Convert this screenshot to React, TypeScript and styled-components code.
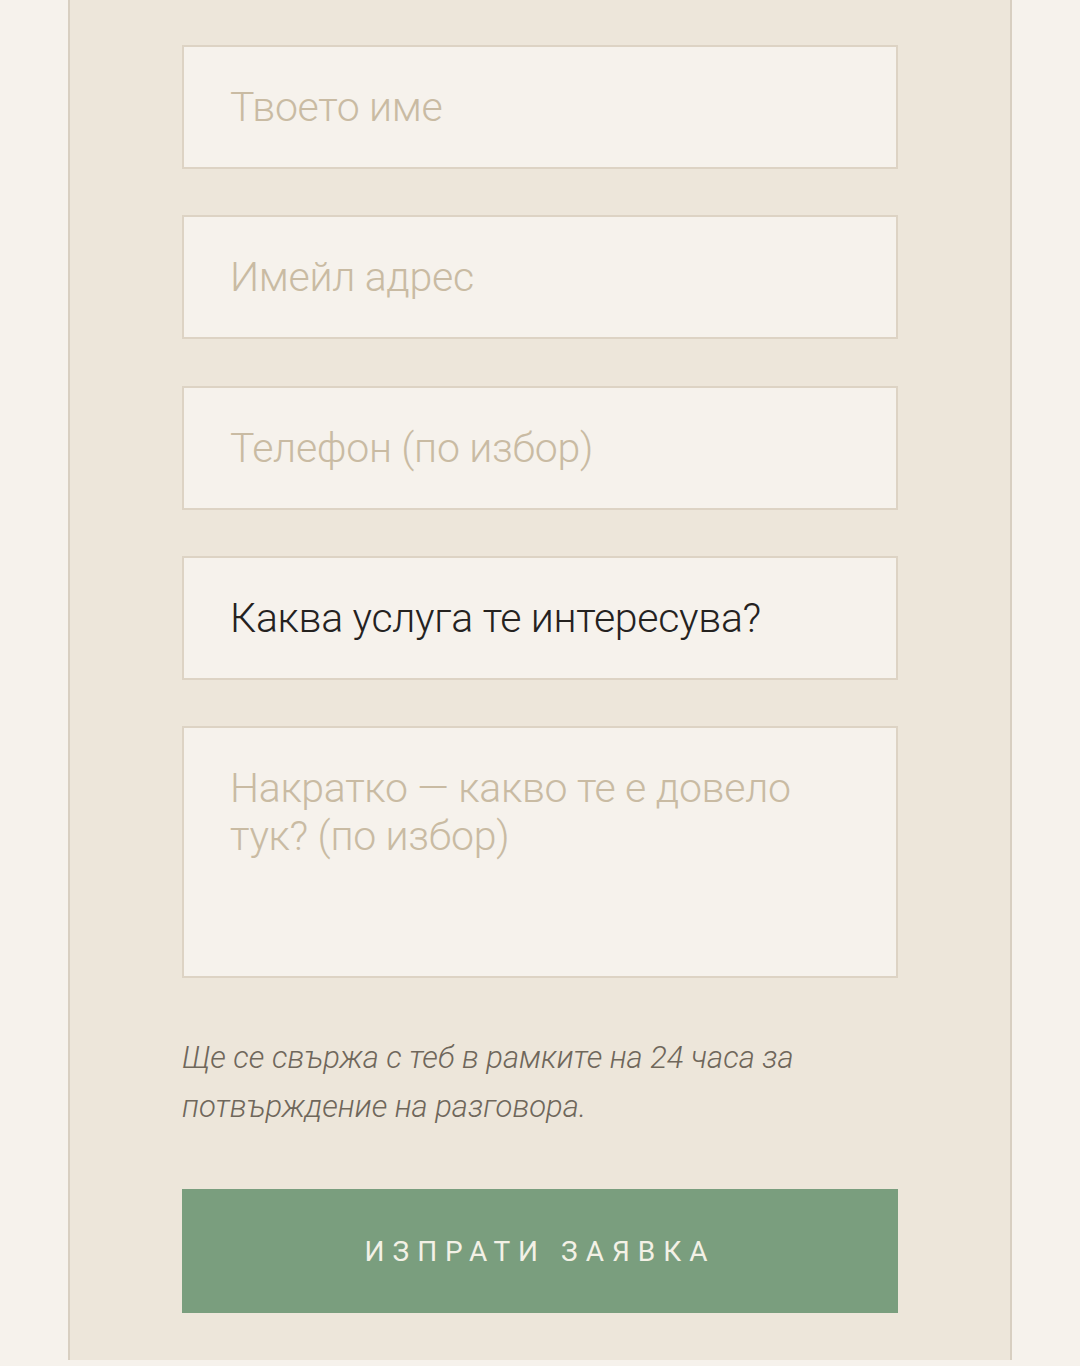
import React from "react";
import styled, { createGlobalStyle } from "styled-components";

const Global = createGlobalStyle`
  html, body { margin: 0; padding: 0; background: #f6f2ec; }
  body { font-family: Roboto, "Noto Sans", sans-serif; }
  * { box-sizing: border-box; }
`;

const Page = styled.div`
  width: 1080px;
  height: 1366px;
  background: #f6f2ec;
  display: flex;
  justify-content: center;
  align-items: flex-start;
`;

const Panel = styled.div`
  width: 944px;
  height: 1360px;
  background: #ede6da;
  border-left: 2px solid #d8cfc1;
  border-right: 2px solid #d8cfc1;
  padding: 45px 112px 0 112px;
`;

const Form = styled.form`
  display: flex;
  flex-direction: column;
  gap: 46.25px;
`;

const fieldBase = `
  width: 100%;
  background: #f6f2ec;
  border: 2px solid #ddd3c4;
  border-radius: 0;
  outline: none;
  font-family: Roboto, "Noto Sans", sans-serif;
  font-weight: 300;
  font-size: 41px;
  letter-spacing: -0.3px;
  color: #2a2622;
  padding: 0 46px;
  margin: 0;
`;

const Input = styled.input`
  ${fieldBase}
  height: 124px;
  &::placeholder { color: #c9bba3; opacity: 1; }
`;

const Select = styled.select`
  ${fieldBase}
  height: 124px;
  appearance: none;
  -webkit-appearance: none;
  color: #25221f;
`;

const TextArea = styled.textarea`
  ${fieldBase}
  height: 252px;
  resize: none;
  padding: 36px 46px;
  line-height: 48px;
  &::placeholder { color: #c9bba3; opacity: 1; }
`;

const Note = styled.p`
  margin: 55px 0 0 0;
  font-family: Roboto, "Noto Sans", sans-serif;
  font-style: italic;
  font-weight: 300;
  font-size: 31px;
  line-height: 49px;
  color: #6f675b;
  padding-right: 90px;
`;

const Submit = styled.button`
  display: block;
  margin-top: 58px;
  height: 124px;
  width: 100%;
  border: none;
  border-radius: 0;
  background: #7a9e7e;
  color: #f3f1e6;
  font-family: Roboto, "Noto Sans", sans-serif;
  font-weight: 400;
  font-size: 28px;
  letter-spacing: 8px;
  text-transform: uppercase;
  cursor: pointer;
`;

export default function App() {
  return (
    <>
      <Global />
      <Page>
        <Panel>
          <Form onSubmit={(e) => e.preventDefault()}>
            <Input type="text" placeholder="Твоето име" />
            <Input type="email" placeholder="Имейл адрес" />
            <Input type="tel" placeholder="Телефон (по избор)" />
            <Select defaultValue="">
              <option value="">Каква услуга те интересува?</option>
            </Select>
            <TextArea placeholder="Накратко — какво те е довело тук? (по избор)" />
          </Form>
          <Note>Ще се свържа с теб в рамките на 24 часа за потвърждение на разговора.</Note>
          <Submit type="submit">Изпрати заявка</Submit>
        </Panel>
      </Page>
    </>
  );
}
